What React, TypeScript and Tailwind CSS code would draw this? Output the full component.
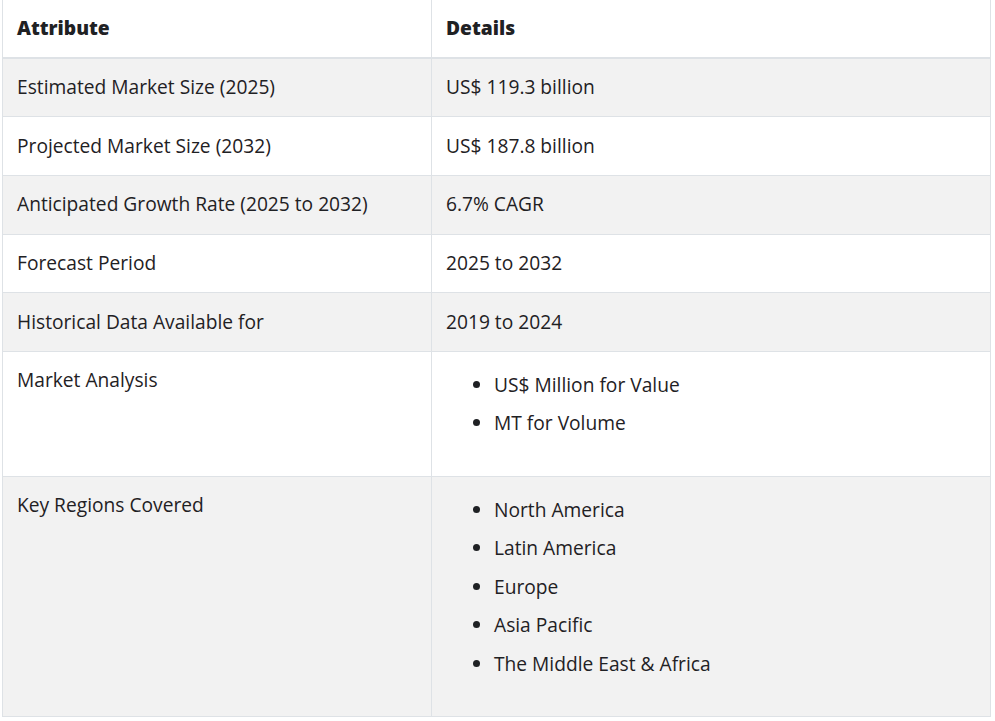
import React from "react";

type Row = { label: string; value?: string; list?: string[] };

const rows: Row[] = [
  { label: "Estimated Market Size (2025)", value: "US$ 119.3 billion" },
  { label: "Projected Market Size (2032)", value: "US$ 187.8 billion" },
  { label: "Anticipated Growth Rate (2025 to 2032)", value: "6.7% CAGR" },
  { label: "Forecast Period", value: "2025 to 2032" },
  { label: "Historical Data Available for", value: "2019 to 2024" },
  { label: "Market Analysis", list: ["US$ Million for Value", "MT for Volume"] },
  {
    label: "Key Regions Covered",
    list: ["North America", "Latin America", "Europe", "Asia Pacific", "The Middle East & Africa"],
  },
];

export default function App() {
  return (
    <div className="bg-white min-h-screen pl-[2px]" style={{ fontFamily: '"Open Sans", sans-serif' }}>
      <table className="w-[989px] border-collapse text-[19.2px] leading-[28.8px] text-[#1f2124] table-fixed">
        <colgroup>
          <col className="w-[429px]" />
          <col />
        </colgroup>
        <thead>
          <tr>
            <th className="border-x border-[#dee2e6] border-b-2 px-[14px] py-[14px] text-left align-top font-extrabold">
              Attribute
            </th>
            <th className="border-x border-[#dee2e6] border-b-2 px-[14px] py-[14px] text-left align-top font-extrabold">
              Details
            </th>
          </tr>
        </thead>
        <tbody>
          {rows.map((r, i) => (
            <tr key={i} className={i % 2 === 0 ? "bg-[#f2f2f2]" : "bg-white"}>
              <td className="border border-[#dee2e6] px-[14px] py-[14.4px] align-top">{r.label}</td>
              <td className="border border-[#dee2e6] px-[14px] py-[14.4px] align-top">
                {r.value ? (
                  r.value
                ) : (
                  <ul className="list-disc pl-[48px] mb-[18.4px]">
                    {r.list!.map((item) => (
                      <li key={item} className="leading-[38.4px]">
                        {item}
                      </li>
                    ))}
                  </ul>
                )}
              </td>
            </tr>
          ))}
        </tbody>
      </table>
    </div>
  );
}
